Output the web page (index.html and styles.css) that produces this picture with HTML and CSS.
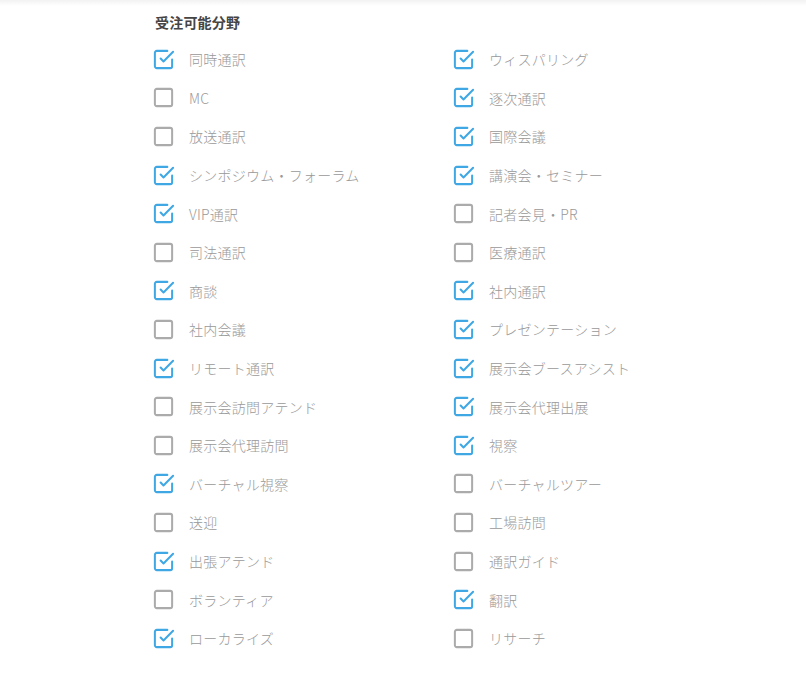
FILE: index.html
```html
<!DOCTYPE html>
<html lang="ja">
<head>
<meta charset="utf-8">
<link rel="stylesheet" href="styles.css">
</head>
<body>
<div class="topshade"></div>
<section class="panel">
  <h2 class="title">受注可能分野</h2>
  <ul class="grid">
    <li class="item on"><span class="box"></span><span class="label">同時通訳</span></li>
    <li class="item on"><span class="box"></span><span class="label">ウィスパリング</span></li>
    <li class="item"><span class="box"></span><span class="label">MC</span></li>
    <li class="item on"><span class="box"></span><span class="label">逐次通訳</span></li>
    <li class="item"><span class="box"></span><span class="label">放送通訳</span></li>
    <li class="item on"><span class="box"></span><span class="label">国際会議</span></li>
    <li class="item on"><span class="box"></span><span class="label">シンポジウム・フォーラム</span></li>
    <li class="item on"><span class="box"></span><span class="label">講演会・セミナー</span></li>
    <li class="item on"><span class="box"></span><span class="label">VIP通訳</span></li>
    <li class="item"><span class="box"></span><span class="label">記者会見・PR</span></li>
    <li class="item"><span class="box"></span><span class="label">司法通訳</span></li>
    <li class="item"><span class="box"></span><span class="label">医療通訳</span></li>
    <li class="item on"><span class="box"></span><span class="label">商談</span></li>
    <li class="item on"><span class="box"></span><span class="label">社内通訳</span></li>
    <li class="item"><span class="box"></span><span class="label">社内会議</span></li>
    <li class="item on"><span class="box"></span><span class="label">プレゼンテーション</span></li>
    <li class="item on"><span class="box"></span><span class="label">リモート通訳</span></li>
    <li class="item on"><span class="box"></span><span class="label">展示会ブースアシスト</span></li>
    <li class="item"><span class="box"></span><span class="label">展示会訪問アテンド</span></li>
    <li class="item on"><span class="box"></span><span class="label">展示会代理出展</span></li>
    <li class="item"><span class="box"></span><span class="label">展示会代理訪問</span></li>
    <li class="item on"><span class="box"></span><span class="label">視察</span></li>
    <li class="item on"><span class="box"></span><span class="label">バーチャル視察</span></li>
    <li class="item"><span class="box"></span><span class="label">バーチャルツアー</span></li>
    <li class="item"><span class="box"></span><span class="label">送迎</span></li>
    <li class="item"><span class="box"></span><span class="label">工場訪問</span></li>
    <li class="item on"><span class="box"></span><span class="label">出張アテンド</span></li>
    <li class="item"><span class="box"></span><span class="label">通訳ガイド</span></li>
    <li class="item"><span class="box"></span><span class="label">ボランティア</span></li>
    <li class="item on"><span class="box"></span><span class="label">翻訳</span></li>
    <li class="item on"><span class="box"></span><span class="label">ローカライズ</span></li>
    <li class="item"><span class="box"></span><span class="label">リサーチ</span></li>
  </ul>
</section>
<script>
document.querySelectorAll('.box').forEach(function (b) {
  var on = b.parentNode.classList.contains('on');
  b.innerHTML = on
    ? '<svg viewBox="0 0 24 24" width="23" height="23" fill="none" stroke="currentColor" stroke-width="2.1" stroke-linecap="round" stroke-linejoin="round"><polyline points="9 11 12 14 22 4"/><path d="M21 12v7a2 2 0 0 1-2 2H5a2 2 0 0 1-2-2V5a2 2 0 0 1 2-2h11"/></svg>'
    : '<svg viewBox="0 0 24 24" width="23" height="23" fill="none" stroke="currentColor" stroke-width="2.1" stroke-linecap="round" stroke-linejoin="round"><rect x="3" y="3" width="18" height="18" rx="2" ry="2"/></svg>';
});
</script>
</body>
</html>
```
FILE: styles.css
```css
html, body {
  margin: 0;
  padding: 0;
  background: #ffffff;
}
body {
  font-family: "Noto Sans CJK JP", "Noto Sans", sans-serif;
  width: 806px;
  height: 685px;
  overflow: hidden;
  position: relative;
}
.topshade {
  position: absolute;
  left: 0;
  top: 0;
  width: 100%;
  height: 6px;
  background: linear-gradient(#f2f2f2, #ffffff);
}
.panel {
  padding: 11px 0 0 155px;
}
.title {
  margin: 0;
  font-size: 14px;
  font-weight: 700;
  color: #454545;
  letter-spacing: 0.2px;
  line-height: 22px;
  height: 22px;
}
.grid {
  list-style: none;
  margin: 7px 0 0 0;
  padding: 0;
  display: grid;
  grid-template-columns: 300px 300px;
  grid-auto-rows: 38.6px;
}
.item {
  display: flex;
  align-items: center;
}
.box {
  width: 23px;
  height: 23px;
  margin-left: -3px;
  margin-right: 14px;
  color: #ababab;
  display: flex;
}
.item.on .box {
  color: #3fa7e4;
}
.box svg {
  display: block;
}
.label {
  font-size: 14px;
  font-weight: 300;
  color: #999999;
  letter-spacing: 0.25px;
}
```
